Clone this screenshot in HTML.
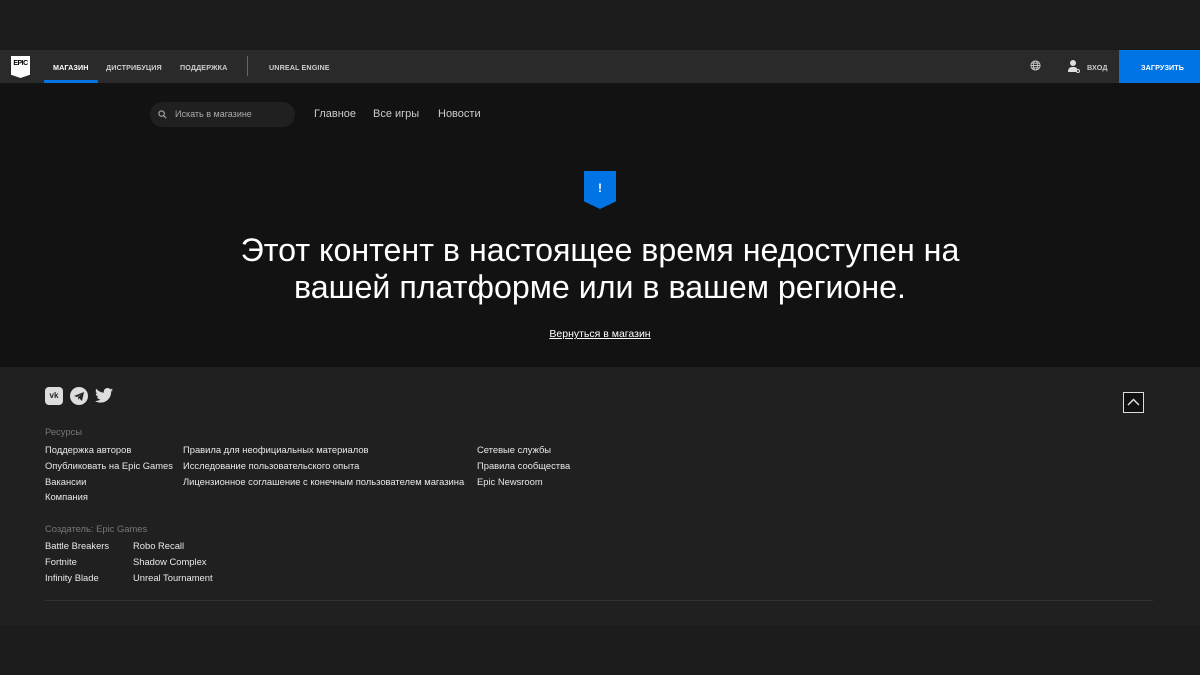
<!DOCTYPE html>
<html><head><meta charset="utf-8"><style>
*{margin:0;padding:0;box-sizing:border-box}
body{width:1200px;height:675px;background:#1c1c1c;font-family:"Liberation Sans","DejaVu Sans",sans-serif;color:#fff;position:relative;overflow:hidden}
.top{position:absolute;left:0;top:0;width:1200px;height:50px;background:#1b1b1b}
.nav{position:absolute;left:0;top:50px;width:1200px;height:33px;background:#2a2a2a}
.nav span{position:absolute;top:13px;font-size:7.2px;font-weight:bold;letter-spacing:.1px;color:#ccc}
.main{position:absolute;left:0;top:83px;width:1200px;height:284px;background:#121212}
.foot{position:absolute;left:0;top:367px;width:1200px;height:258px;background:#202020}
.f{position:absolute;font-size:9.4px;color:#e8e8e8;font-family:"Liberation Sans",sans-serif}
.g{color:#777}
</style></head><body>
<div class="top"></div>
<div class="nav">
  <div style="position:absolute;left:11px;top:6px;width:19px;height:22px;background:#fff;clip-path:polygon(0 0,100% 0,100% 85%,50% 100%,0 85%);color:#000;font-size:7px;font-weight:bold;text-align:center;line-height:9px;padding-top:3px;letter-spacing:-.5px">EPIC</div>
  <span style="left:53px;color:#fff">МАГАЗИН</span>
  <div style="position:absolute;left:44px;top:30px;width:54px;height:3px;background:#0074e4"></div>
  <span style="left:106px">ДИСТРИБУЦИЯ</span>
  <span style="left:180px">ПОДДЕРЖКА</span>
  <div style="position:absolute;left:247px;top:6px;width:1px;height:20px;background:#666"></div>
  <span style="left:269px">UNREAL ENGINE</span>
  <svg style="position:absolute;left:1030px;top:10px" width="11" height="11" viewBox="0 0 12 12" fill="none" stroke="#ccc" stroke-width="1"><circle cx="6" cy="6" r="5"/><ellipse cx="6" cy="6" rx="2.2" ry="5"/><path d="M1 6h10M2 3.5h8M2 8.5h8"/></svg>
  <svg style="position:absolute;left:1068px;top:9px" width="12" height="14" viewBox="0 0 12 14" fill="#ddd"><circle cx="5" cy="4" r="3"/><path d="M0 13c0-4 2-5 5-5s4 1 4 2v3z"/><circle cx="10" cy="12" r="1.5" fill="none" stroke="#ddd"/></svg>
  <span style="left:1087px">ВХОД</span>
  <div style="position:absolute;left:1119px;top:0;width:81px;height:33px;background:#0074e4"></div>
  <span style="left:1141px;color:#fff">ЗАГРУЗИТЬ</span>
</div>
<div class="main">
  <div style="position:absolute;left:150px;top:19px;width:145px;height:25px;border-radius:13px;background:#202020"></div>
  <svg style="position:absolute;left:158px;top:27px" width="9" height="9" viewBox="0 0 10 10" fill="none" stroke="#aaa" stroke-width="1.2"><circle cx="4" cy="4" r="3"/><path d="M6.3 6.3L9 9"/></svg>
  <div style="position:absolute;left:175px;top:26px;font-size:9px;color:#aaa">Искать в магазине</div>
  <div style="position:absolute;left:314px;top:25px;font-size:11px;color:#ccc">Главное</div>
  <div style="position:absolute;left:373px;top:25px;font-size:11px;color:#ccc">Все игры</div>
  <div style="position:absolute;left:438px;top:25px;font-size:11px;color:#ccc">Новости</div>
  <div style="position:absolute;left:584px;top:88px;width:32px;height:38px;background:#0074e4;clip-path:polygon(0 0,100% 0,100% 80%,50% 100%,0 80%);text-align:center;font-weight:bold;font-size:12px;line-height:34px">!</div>
  <div style="position:absolute;left:0;top:149px;width:1200px;text-align:center;font-size:32.2px;line-height:37px;color:#fff">Этот контент в настоящее время недоступен на<br>вашей платформе или в вашем регионе.</div>
  <div style="position:absolute;left:0;top:245px;width:1200px;text-align:center;font-size:10.5px;text-decoration:underline;color:#fff">Вернуться в магазин</div>
</div>
<div class="foot">
  <div style="position:absolute;left:45px;top:20px;width:18px;height:18px;border-radius:4px;background:#ddd;color:#222;font-size:8px;font-weight:bold;text-align:center;line-height:18px">vk</div>
  <div style="position:absolute;left:70px;top:20px;width:18px;height:18px;border-radius:50%;background:#ddd"></div>
  <svg style="position:absolute;left:74px;top:25px" width="10" height="9" viewBox="0 0 10 9"><path d="M0 4L10 0 8 9 5 6 4 8 4 5 8 2 3 5z" fill="#222"/></svg>
  <svg style="position:absolute;left:95px;top:21px" width="18" height="15" viewBox="0 0 24 20"><path d="M24 2.4c-.9.4-1.8.6-2.8.8 1-.6 1.800-1.6 2.2-2.7-1 .6-2 1-3.1 1.2A4.9 4.9 0 0 0 11.9 6.2 14 14 0 0 1 1.7 1a4.9 4.9 0 0 0 1.5 6.6c-.8 0-1.6-.2-2.2-.6 0 2.4 1.7 4.4 3.9 4.8-.7.2-1.5.2-2.2.1.6 2 2.4 3.4 4.6 3.4A9.9 9.9 0 0 1 0 17.3 14 14 0 0 0 7.5 19.5c9 0 14-7.5 14-14v-.6c1-.7 1.8-1.6 2.5-2.5z" fill="#ddd"/></svg>
  <div style="position:absolute;left:1123px;top:25px;width:21px;height:21px;border:1.5px solid #ddd;background:#111"></div>
  <svg style="position:absolute;left:1127px;top:31px" width="13" height="8" viewBox="0 0 13 8" fill="none" stroke="#ddd" stroke-width="1.5"><path d="M1 7l5.5-5.5L12 7"/></svg>
  <div class="f g" style="left:45px;top:59px">Ресурсы</div>
  <div class="f" style="left:45px;top:77px">Поддержка авторов</div>
  <div class="f" style="left:45px;top:93px">Опубликовать на Epic Games</div>
  <div class="f" style="left:45px;top:109px">Вакансии</div>
  <div class="f" style="left:45px;top:124px">Компания</div>
  <div class="f" style="left:183px;top:77px">Правила для неофициальных материалов</div>
  <div class="f" style="left:183px;top:93px">Исследование пользовательского опыта</div>
  <div class="f" style="left:183px;top:109px">Лицензионное соглашение с конечным пользователем магазина</div>
  <div class="f" style="left:477px;top:77px">Сетевые службы</div>
  <div class="f" style="left:477px;top:93px">Правила сообщества</div>
  <div class="f" style="left:477px;top:109px">Epic Newsroom</div>
  <div class="f g" style="left:45px;top:156px">Создатель: Epic Games</div>
  <div class="f" style="left:45px;top:173px">Battle Breakers</div>
  <div class="f" style="left:45px;top:189px">Fortnite</div>
  <div class="f" style="left:45px;top:205px">Infinity Blade</div>
  <div class="f" style="left:133px;top:173px">Robo Recall</div>
  <div class="f" style="left:133px;top:189px">Shadow Complex</div>
  <div class="f" style="left:133px;top:205px">Unreal Tournament</div>
  <div style="position:absolute;left:45px;top:233px;width:1108px;height:1px;background:#333"></div>
</div>
</body></html>
